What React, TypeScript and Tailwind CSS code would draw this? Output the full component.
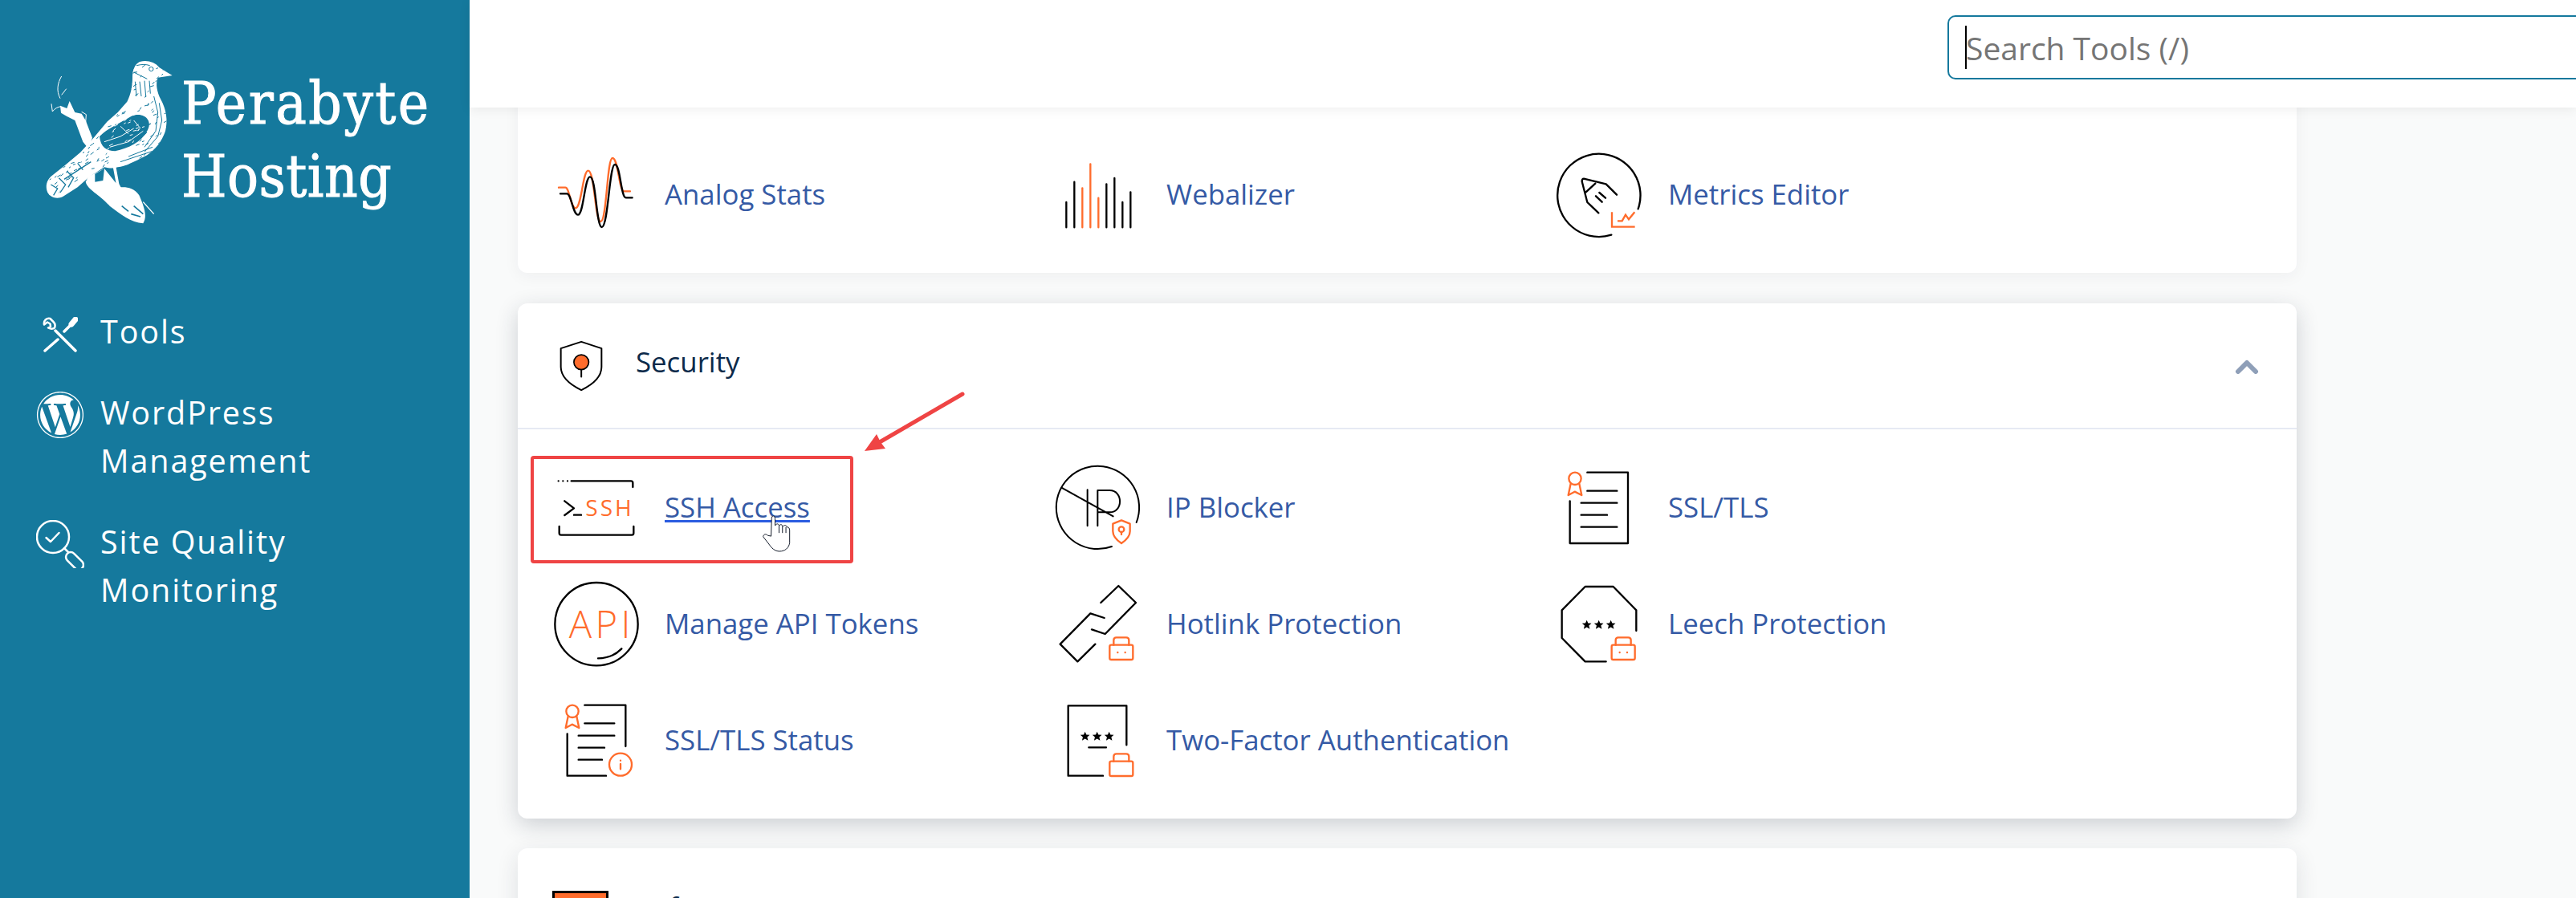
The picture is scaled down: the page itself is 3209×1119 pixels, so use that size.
import type { ReactNode } from "react";
import { FaWordpress } from "react-icons/fa";

const ORANGE = "#ff6c2c";
const TEAL = "#15799d";

// Shared wrapper: every tile icon is drawn on a 312 unit grid shown at 104px
function TileIcon({ children }: { children: ReactNode }) {
  return (
    <svg viewBox="0 0 312 312" className="w-[104px] h-[104px] shrink-0 overflow-visible" fill="none" stroke="#000" strokeWidth={7} strokeLinecap="round" strokeLinejoin="round">
      {children}
    </svg>
  );
}

function Star({ x, y }: { x: number; y: number }) {
  return (
    <path
      transform={`translate(${x} ${y}) scale(1.25)`}
      d="M0-14 4-5 14-4.500 6.500 2 9 12 0 7-9 12-6.500 2-14-4.500-4-5Z"
      fill="#000"
      stroke="none"
    />
  );
}

function Lock({ x, y, dots }: { x: number; y: number; dots?: boolean }) {
  return (
    <g stroke={ORANGE} transform={`translate(${x} ${y})`}>
      <rect x="0" y="28" width="87" height="55" rx="6" fill="#fff" />
      <path d="M15 28V10Q15 0 25 0H62Q72 0 72 10V28" />
      {dots && <path d="M30 56h.01M58 56h.01" />}
    </g>
  );
}

function Ribbon({ x }: { x: number }) {
  return (
    <g stroke={ORANGE} transform={`translate(${x} 0)`}>
      <circle cx="0" cy="43" r="23" />
      <path d="M-16 62-25 105 -1 92 25 105 16 62" />
    </g>
  );
}

const icons: Record<string, ReactNode> = {
  analog: (
    <TileIcon>
      <path stroke={ORANGE} d="M15 125H40C55 125 60 202 78 202 100 202 105 62 125 62 150 62 150 252 172 252 195 252 195 15 216 15 238 15 240 139 259 139H282" />
      <path d="M21 148H46C62 148 68 227 87 227 108 227 112 85 132 85 155 85 155 273 176 273 200 273 204 39 225 39 246 39 247 163 266 163H290" />
    </TileIcon>
  ),
  webalizer: (
    <TileIcon>
      <path d="M37 274V180M67 274V104M187 274V112M217 274V90M247 274V180M277 274V142" />
      <path stroke={ORANGE} d="M97 274V127M127 274V37M157 274V164" />
    </TileIcon>
  ),
  metrics: (
    <TileIcon>
      <path d="M199 302A155 155 0 1 1 299 205" />
      <path d="M151 220 109 180 89 102Q89 92 96 92L179 112 219 152M104 142 139 110M141 157 164 179M154 144 177 164" />
      <path stroke={ORANGE} strokeLinecap="butt" strokeLinejoin="miter" d="M201 217V272H287M222 250H239L252 227 264 244 286 217" />
    </TileIcon>
  ),
  ssh: (
    <TileIcon>
      <path d="M62 52H285Q292 52 292 59V75M17 222V247Q17 254 24 254H288Q295 254 295 247V222M37 127 72 154 37 180M72 179H99" />
      <path d="M14 52h.01M31 52h.01M48 52h.01" />
      <text x="115" y="182" fill={ORANGE} stroke="none" fontSize="84" fontWeight="500" letterSpacing="9" className="font-['Open_Sans',sans-serif]">SSH</text>
    </TileIcon>
  ),
  ip: (
    <TileIcon>
      <path strokeWidth={6} d="M207 297A155 155 0 1 1 299 207" />
      <path strokeWidth={6} d="M19 77 212 184M116 85V220M154 220V87H199C250 87 250 169 199 169H154" />
      <path stroke={ORANGE} fill="#fff" d="M243 199 275 212V240C275 262 258 275 243 285 228 275 211 262 211 240V212Z" />
      <circle cx="243" cy="233" r="10" stroke={ORANGE} />
      <path stroke={ORANGE} d="M243 243V252" />
    </TileIcon>
  ),
  ssl: (
    <TileIcon>
      <path d="M109 20H261V285H44V127M109 89H220M86 134H220M86 179H183M86 224H220" />
      <Ribbon x={63} />
    </TileIcon>
  ),
  api: (
    <TileIcon>
      <circle cx="156" cy="152" r="155" />
      <path d="M162 280Q215 280 250 244" />
      <text x="53" y="204" fill={ORANGE} stroke="none" fontSize="142" fontWeight="300" letterSpacing="13" className="font-['Open_Sans',sans-serif]">API</text>
    </TileIcon>
  ),
  hotlink: (
    <TileIcon>
      <path d="M166 72 232 9 297 72 182 189 132 172M179 129 127 112 14 227 79 292 145 227" />
      <Lock x={199} y={202} dots />
    </TileIcon>
  ),
  leech: (
    <TileIcon>
      <path d="M179 292H101L14 204V100L101 12H206L292 100V177" />
      <Star x={107} y={155} />
      <Star x={152} y={155} />
      <Star x={197} y={155} />
      <Lock x={200} y={202} dots />
    </TileIcon>
  ),
  sslStatus: (
    <TileIcon>
      <path d="M112 20H265V174M47 127V284H192M112 88H223M89 134H223M89 179H186M89 224H177" />
      <Ribbon x={66} />
      <circle cx="246" cy="242" r="42" stroke={ORANGE} />
      <path stroke={ORANGE} d="M246 227h.01M246 240V259" />
    </TileIcon>
  ),
  twoFactor: (
    <TileIcon>
      <path d="M174 284H44V22H262V169M121 178H186" />
      <Star x={107} y={137} />
      <Star x={152} y={137} />
      <Star x={197} y={137} />
      <Lock x={199} y={202} />
    </TileIcon>
  ),
};

const metricsRow = [
  { icon: icons.analog, label: "Analog Stats" },
  { icon: icons.webalizer, label: "Webalizer" },
  { icon: icons.metrics, label: "Metrics Editor" },
];

const securityRows = [
  { icon: icons.ssh, label: "SSH Access", active: true },
  { icon: icons.ip, label: "IP Blocker" },
  { icon: icons.ssl, label: "SSL/TLS" },
  { icon: icons.api, label: "Manage API Tokens" },
  { icon: icons.hotlink, label: "Hotlink Protection" },
  { icon: icons.leech, label: "Leech Protection" },
  { icon: icons.sslStatus, label: "SSL/TLS Status" },
  { icon: icons.twoFactor, label: "Two-Factor Authentication" },
];

// Engraving speckle for the logo bird, fixed seed so it never changes
function speckles(count: number, start: number) {
  const out: string[] = [];
  let seed = start;
  const next = () => {
    seed = (seed * 16807) % 2147483647;
    return seed / 2147483647;
  };
  for (let i = 0; i < count; i++) {
    const x = 30 + next() * 445;
    const y = 20 + next() * 510;
    out.push(`M${x.toFixed(0)} ${y.toFixed(0)}l${(4 + next() * 10).toFixed(0)} ${(-2 - next() * 8).toFixed(0)}`);
  }
  return out.join("");
}

const BODY =
  "M494 72 470 58 445 42C430 22 400 14 375 20 352 28 345 55 345 80 345 110 340 140 325 170L290 210 250 245 200 305 150 360 90 410 40 450C25 465 18 485 28 510 40 530 65 535 85 525L140 490 185 450 240 415C260 420 275 420 290 415 320 412 345 398 400 370 430 350 455 320 468 280 478 240 472 200 450 160 438 135 430 105 440 80 470 75Z";

function BirdLogo() {
  return (
    <svg viewBox="0 0 525 645" className="w-[175px] h-[215px] shrink-0">
      <defs>
        <clipPath id="bird-body">
          <path d={BODY} />
        </clipPath>
      </defs>
      {/* upper branch and wisps */}
      <path fill="#fff" d="M75 185 100 195 110 168 130 210 155 215 170 240 195 305 180 345 160 320 130 240 100 225 78 212Z" />
      <path fill="none" stroke="#fff" strokeWidth="3" d="M80 75C65 100 60 130 75 158M98 122 80 145M42 178 46 207C55 195 65 190 78 188M155 208 172 218 170 250" />
      {/* lower branch, foot */}
      <path fill="#fff" d="M170 470C178 500 220 515 260 560 300 590 340 622 385 625 400 600 392 570 370 520 350 490 320 488 300 490L280 470 240 420 180 450Z" />
      <path fill="none" stroke="#fff" strokeWidth="4" d="M385 545 425 590" />
      <path fill="none" stroke="#fff" strokeWidth="11" d="M278 415 290 480 320 535" />
      <path fill={TEAL} d="M205 440 240 420 235 465 205 470Z" />
      <path fill="none" stroke={TEAL} strokeWidth="5" d="M305 560 330 580M340 590 375 600M350 560 385 590" />
      {/* body */}
      <path fill="#fff" d={BODY} />
      <g clipPath="url(#bird-body)" fill="none" stroke={TEAL}>
        <path strokeWidth="3" d={speckles(260, 1337)} />
        <path fill={TEAL} stroke="none" d="M222 300C250 270 300 250 340 225 385 205 425 240 400 280 380 320 330 345 280 355 250 355 225 340 222 300Z" />
        <path strokeWidth="3" stroke="#fff" d={speckles(240, 4242)} />
        <path strokeWidth="3" stroke="#fff" d="M240 320 300 300 350 270M260 340 330 320 385 280M300 262 330 290M350 240 375 270" />
        <path strokeWidth="3" d="M360 35C380 30 395 30 410 35M350 60 400 85M355 95 360 150M372 95 378 150M390 92 395 150M408 92 412 140M425 150 440 210 432 280 390 340M445 175 455 240 440 300 390 358M330 375 420 340M300 395 420 355" />
        <circle cx="415" cy="48" r="8" strokeWidth="3" />
        <path strokeWidth="4" d="M40 480 65 495 50 520M70 455 95 480 75 510M100 430 125 455 105 490M140 400 160 425M90 460 190 395" />
      </g>
    </svg>
  );
}

function NavItem({ icon, lines, iconClass }: { icon: ReactNode; lines: string[]; iconClass: string }) {
  return (
    <div className="flex gap-[20px]">
      <div className={`w-[60px] flex justify-center shrink-0 ${iconClass}`}>{icon}</div>
      <div className="text-[39.5px] leading-[60px] tracking-[1.9px] text-white">
        {lines.map((line) => (
          <div key={line}>{line}</div>
        ))}
      </div>
    </div>
  );
}

function Sidebar() {
  return (
    <aside className="w-[585px] shrink-0 bg-[#15799d]">
      <div className="flex pl-[50px] pt-[70px]">
        <BirdLogo />
        <div className="ml-[1px] mt-[14px] font-['DejaVu_Serif_Condensed','DejaVu_Serif',serif] text-[72px] leading-[91px] text-white [font-stretch:condensed] [-webkit-text-stroke:1px_white]">
          <div className="tracking-[2.5px]">Perabyte</div>
          <div className="tracking-[0.5px]">Hosting</div>
        </div>
      </div>
      <nav className="mt-[98px] pl-[45px] flex flex-col gap-[41px]">
        <NavItem
          iconClass="mt-[12px]"
          lines={["Tools"]}
          icon={
            <svg viewBox="0 0 44 44" className="w-[44px] h-[44px]" fill="none" stroke="#fff" strokeWidth="3.500" strokeLinecap="round" strokeLinejoin="round">
              <path d="M9.500 2C5 1 1 4.500 2 9.500L6 6.500 9.500 8.500 10 12 7 13.500C10 15 13 15 15 13.500 16 11 15.500 8 13.500 6Z" strokeWidth="2.500" />
              <path d="M16 17 41 42M3 42 19 28M27 18 38 7" />
              <path d="M36 9 41 3" strokeWidth="7" />
            </svg>
          }
        />
        <NavItem iconClass="mt-[3px]" lines={["WordPress", "Management"]} icon={<FaWordpress className="w-[60px] h-[60px] text-white" />} />
        <NavItem
          iconClass="mt-[3px]"
          lines={["Site Quality", "Monitoring"]}
          icon={
            <svg viewBox="0 0 60 60" className="w-[60px] h-[60px]" fill="none" stroke="#fff" strokeWidth="2.500" strokeLinecap="round" strokeLinejoin="round">
              <circle cx="21" cy="21" r="20" />
              <path d="M12.500 22 18 27 28.500 16M35 35 40 40" />
              <rect x="35" y="45" width="26" height="12" rx="6" transform="rotate(45 48 51)" />
            </svg>
          }
        />
      </nav>
    </aside>
  );
}

function Tile({ icon, label, active }: { icon: ReactNode; label: string; active?: boolean }) {
  return (
    <div className="relative flex items-center h-[145px] gap-[33px]">
      {icon}
      <span className={`mb-[3px] text-[34.8px] leading-[48px] text-[#355aa5] ${active ? "underline decoration-[#2b5ce0] decoration-[3px] underline-offset-[3px]" : ""}`}>
        {label}
      </span>
      {active && (
        <>
          {/* annotation box and pointer from the screenshot */}
          <div className="absolute left-[-30px] top-[7px] w-[402px] h-[134px] rounded-[4px] border-4 border-[#ef4444]" />
          <svg viewBox="950 805 115 148" className="absolute left-[257px] top-[79px] w-[38px] h-[49px]" fill="#fff" stroke="#111827" strokeWidth="3">
            <path d="M988 890 990 825C990 810 1003 810 1003 825V850C1010 840 1018 843 1018 852 1024 842 1031 846 1031 855 1038 846 1046 848 1048 856 1054 855 1058 860 1058 868V915C1055 935 1040 947 1020 947 1002 947 990 935 980 920L958 892C960 882 968 880 975 887Z" />
            <path fill="none" d="M1018 852V878M1031 855V878M1044 856V878" />
          </svg>
        </>
      )}
    </div>
  );
}

function Main() {
  return (
    <div className="flex-1 min-w-0 flex flex-col">
      <header className="relative z-10 h-[134px] shrink-0 bg-white pl-[1841px] pt-[19px] shadow-[0_2px_14px_rgba(0,0,0,0.07)]">
        <div className="relative w-[1200px] h-[80px]">
          <input
            readOnly
            placeholder="Search Tools (/)"
            className="w-full h-full rounded-[10px] border-2 border-[#15799d] pl-[21px] text-[39px] outline-none placeholder:text-[#757575]"
          />
          <span className="absolute left-[22px] top-[13px] w-[2px] h-[54px] bg-black" />
        </div>
      </header>

      <div className="flex-1 min-h-0 overflow-hidden">
        <div className="w-[2216px] ml-[60px] flex flex-col gap-[38px] -mt-[108px]">
          {/* Metrics, scrolled up under the header */}
          <section className="rounded-[12px] bg-white pl-[46px] pb-[24px] shadow-[0_4px_20px_rgba(30,41,59,0.05)]">
            <div className="grid grid-cols-[625px_625px_625px]">
              <div className="h-[145px]">
                <TileIcon>
                  <path stroke={ORANGE} strokeWidth={8} strokeLinecap="butt" strokeLinejoin="miter" d="M206 200V273H286V200" />
                </TileIcon>
              </div>
              <div className="h-[145px]">
                <TileIcon>
                  <path d="M42 200V275Q42 285 52 285H192" />
                  <path stroke={ORANGE} strokeWidth={8} d="M219 258 241 280 264 258" />
                </TileIcon>
              </div>
              <div className="h-[145px]">
                <TileIcon>
                  <path d="M255 282 300 240" />
                </TileIcon>
              </div>
              {metricsRow.map((tile) => (
                <Tile key={tile.label} icon={tile.icon} label={tile.label} />
              ))}
            </div>
          </section>

          {/* Security */}
          <section className="relative rounded-[12px] bg-white shadow-[0_8px_28px_rgba(30,41,59,0.2)]">
            <div className="flex items-center h-[157px] pl-[52px] pr-[47px] border-b-2 border-[#e6eaf3]">
              <svg viewBox="197 158 163 192" className="w-[54px] h-[64px] shrink-0" fill="none" stroke="#000" strokeWidth="6" strokeLinecap="round" strokeLinejoin="round">
                <path d="M279 163 355 188V258C355 295 320 325 279 345 238 325 202 295 202 258V188Z" />
                <circle cx="279" cy="240" r="28" fill={ORANGE} strokeWidth="5" />
                <path d="M279 268V295" />
              </svg>
              <h2 className="ml-[41px] mb-[10px] text-[34.8px] leading-[48px] font-normal text-[#0c2a4a]">Security</h2>
              <svg viewBox="0 0 30 18" className="ml-auto mt-[2px] w-[30px] h-[18px]" fill="none" stroke="#8f9fb8" strokeWidth="6" strokeLinecap="round" strokeLinejoin="round">
                <path d="M4 15 15 4 26 15" />
              </svg>
            </div>
            <div className="grid grid-cols-[625px_625px_625px] pl-[46px] pt-[26px] pb-[24px]">
              {securityRows.map((tile) => (
                <Tile key={tile.label} icon={tile.icon} label={tile.label} active={tile.active} />
              ))}
            </div>
            <svg viewBox="0 0 135 85" className="absolute left-[425px] top-[107px] w-[135px] h-[85px]" fill="#ef4444">
              <path d="M129 6 24 67" fill="none" stroke="#ef4444" strokeWidth="5" strokeLinecap="round" />
              <path d="M7 77 22 56 27 66 33 74Z" />
            </svg>
          </section>

          {/* Software, cut off by the window */}
          <section className="rounded-[12px] bg-white h-[300px] -mt-[1px] shadow-[0_8px_28px_rgba(30,41,59,0.12)]">
            <div className="flex items-center h-[157px] pl-[43px]">
              <div className="w-[70px] h-[76px] self-start mt-[53px] border-[3px] border-black bg-[#ff6c2c] shrink-0" />
              <h2 className="ml-[35px] mb-[10px] text-[34.8px] leading-[48px] font-normal text-[#0c2a4a]">Software</h2>
            </div>
          </section>
        </div>
      </div>
    </div>
  );
}

export default function App() {
  return (
    <div className="flex h-screen w-screen overflow-hidden bg-[#f9fafa] font-['Open_Sans',sans-serif]">
      <Sidebar />
      <Main />
    </div>
  );
}
